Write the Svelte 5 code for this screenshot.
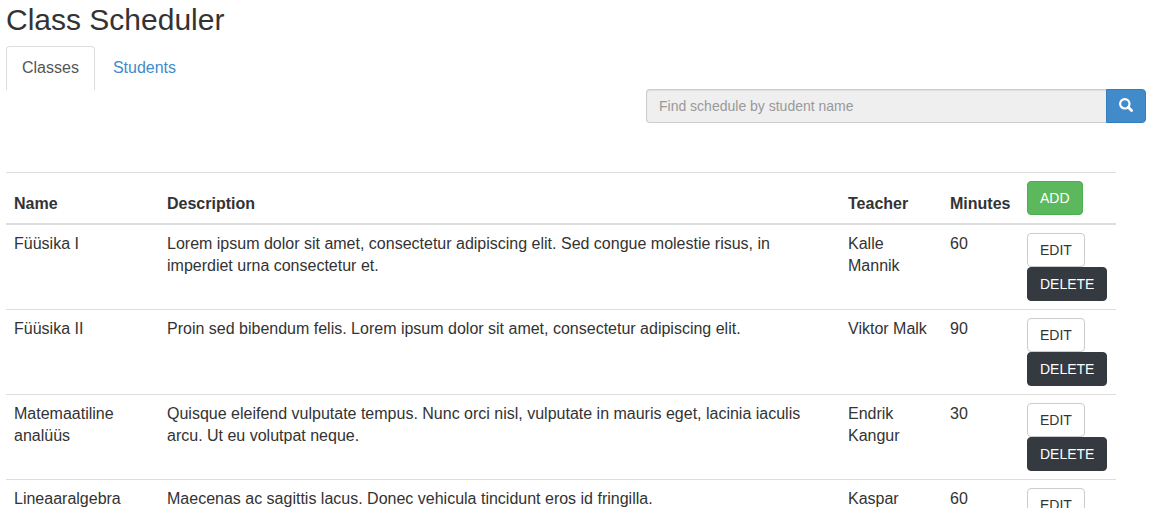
<script>
  let query = $state('');
  const classes = [
    { name: 'Füüsika I', description: 'Lorem ipsum dolor sit amet, consectetur adipiscing elit. Sed congue molestie risus, in imperdiet urna consectetur et.', teacher: 'Kalle Mannik', minutes: 60 },
    { name: 'Füüsika II', description: 'Proin sed bibendum felis. Lorem ipsum dolor sit amet, consectetur adipiscing elit.', teacher: 'Viktor Malk', minutes: 90 },
    { name: 'Matemaatiline analüüs', description: 'Quisque eleifend vulputate tempus. Nunc orci nisl, vulputate in mauris eget, lacinia iaculis arcu. Ut eu volutpat neque.', teacher: 'Endrik Kangur', minutes: 30 },
    { name: 'Lineaaralgebra', description: 'Maecenas ac sagittis lacus. Donec vehicula tincidunt eros id fringilla.', teacher: 'Kaspar', minutes: 60 }
  ];
</script>

<div class="page">
  <h1>Class Scheduler</h1>
  <nav class="tabs">
    <a class="tab active" href="#classes" aria-current="page">Classes</a>
    <a class="tab" href="#students">Students</a>
  </nav>

  <form class="search" onsubmit={(e) => e.preventDefault()}>
    <input type="text" aria-label="Find schedule by student name" placeholder="Find schedule by student name" bind:value={query} />
    <button class="btn go" type="submit" aria-label="Search">
      <svg viewBox="0 0 14 16" width="14" height="16" aria-hidden="true">
        <circle cx="5.8" cy="5.8" r="4.7" fill="none" stroke="currentColor" stroke-width="2.2" />
        <path d="M9.3 9.3 L12.6 12.6" fill="none" stroke="currentColor" stroke-width="2.8" stroke-linecap="round" />
      </svg>
    </button>
  </form>

  <div class="listing">
    <table>
      <colgroup>
        <col class="c-name" /><col /><col class="c-teacher" /><col class="c-minutes" /><col class="c-actions" />
      </colgroup>
      <thead>
        <tr>
          <th scope="col">Name</th>
          <th scope="col">Description</th>
          <th scope="col">Teacher</th>
          <th scope="col">Minutes</th>
          <td><div class="actions"><button class="btn add" type="button">ADD</button></div></td>
        </tr>
      </thead>
      <tbody>
        {#each classes as c}
          <tr>
            <td>{c.name}</td>
            <td>{c.description}</td>
            <td>{c.teacher}</td>
            <td>{c.minutes}</td>
            <td>
              <div class="actions">
                <button class="btn" type="button">EDIT</button>
                <button class="btn delete" type="button">DELETE</button>
              </div>
            </td>
          </tr>
        {/each}
      </tbody>
    </table>
  </div>
</div>

<style>
  :global(body) {
    background: #fff;
  }
  .page {
    padding: 3px 3px 0 6px;
    font-family: "Liberation Sans", Arial, Helvetica, sans-serif;
    font-size: 16px;
    line-height: 22px;
    color: #333;
  }
  .page * {
    box-sizing: border-box;
  }
  h1 {
    margin: 0 0 10px;
    font-size: 30px;
    line-height: 33px;
    font-weight: 400;
  }
  .tabs {
    display: flex;
    gap: 2px;
    height: 43px;
  }
  .tab {
    height: 44px;
    padding: 10px 15px;
    border: 1px solid transparent;
    border-bottom: 0;
    border-radius: 4px 4px 0 0;
    color: #428bca;
    text-decoration: none;
  }
  .tab.active {
    border-color: #ddd;
    color: #555;
  }
  .search {
    display: flex;
    width: 500px;
    max-width: 100%;
    margin-left: auto;
  }
  input {
    flex: 1;
    min-width: 0;
    height: 34px;
    margin: 0;
    padding: 6px 12px;
    border: 1px solid #ccc;
    border-right: 0;
    border-radius: 4px 0 0 4px;
    background: #efefef;
    box-shadow: inset 0 1px 1px rgba(0, 0, 0, 0.075);
    font-family: inherit;
    font-size: 14px;
    color: #555;
  }
  input::placeholder {
    color: #999;
    opacity: 1;
  }
  .btn {
    height: 34px;
    margin: 0;
    padding: 6px 12px;
    border: 1px solid #ccc;
    border-radius: 4px;
    background: #fff;
    font-family: inherit;
    font-size: 14px;
    line-height: 20px;
    color: #333;
    cursor: pointer;
  }
  .go {
    display: flex;
    align-items: center;
    border-color: #357ebd;
    border-radius: 0 4px 4px 0;
    background: #428bca;
    color: #fff;
  }
  .add {
    border-color: #4cae4c;
    background: #5cb85c;
    color: #fff;
  }
  .delete {
    border-color: #343a40;
    background: #343a40;
    color: #fff;
  }
  .listing {
    padding: 49px 30px 0 0;
  }
  table {
    width: 100%;
    table-layout: fixed;
    border-collapse: collapse;
  }
  .c-name {
    width: 153px;
  }
  .c-teacher {
    width: 102px;
  }
  .c-minutes {
    width: 77px;
  }
  .c-actions {
    width: 97px;
  }
  th,
  td {
    padding: 8px;
    border-top: 1px solid #ddd;
    text-align: left;
    vertical-align: top;
  }
  th {
    vertical-align: bottom;
  }
  thead th,
  thead td {
    border-bottom: 2px solid #ddd;
  }
  .actions {
    display: flex;
    flex-direction: column;
    align-items: flex-start;
  }
</style>
